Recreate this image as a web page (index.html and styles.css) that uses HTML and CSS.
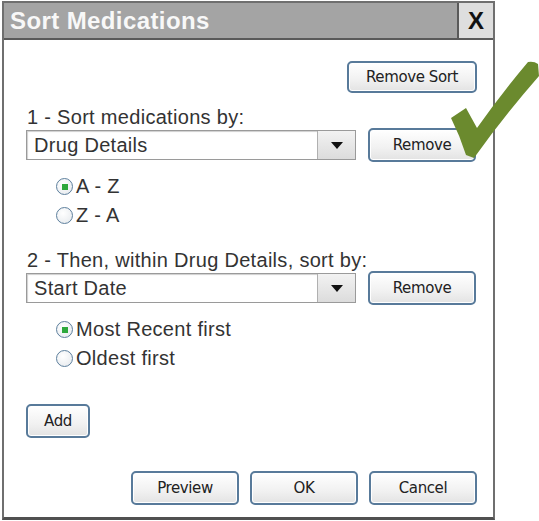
FILE: index.html
```html
<!DOCTYPE html>
<html>
<head>
<meta charset="utf-8">
<link rel="stylesheet" href="styles.css">
</head>
<body>
<div class="dialog">
  <div class="titlebar">
    <div class="title">Sort Medications</div>
    <div class="close">X</div>
  </div>
  <div class="content">
    <div class="row-end"><button class="btn btn-sort">Remove Sort</button></div>
    <div class="label label-1">1 - Sort medications by:</div>
    <div class="select-row">
      <div class="select"><span class="select-text">Drug Details</span><span class="select-arrow"><span class="tri"></span></span></div>
      <button class="btn btn-remove">Remove</button>
    </div>
    <div class="radios">
      <div class="radio"><span class="circle checked"></span><span>A - Z</span></div>
      <div class="radio"><span class="circle"></span><span>Z - A</span></div>
    </div>
    <div class="label label-2">2 - Then, within Drug Details, sort by:</div>
    <div class="select-row">
      <div class="select"><span class="select-text">Start Date</span><span class="select-arrow"><span class="tri"></span></span></div>
      <button class="btn btn-remove">Remove</button>
    </div>
    <div class="radios">
      <div class="radio"><span class="circle checked"></span><span>Most Recent first</span></div>
      <div class="radio"><span class="circle"></span><span>Oldest first</span></div>
    </div>
    <div class="add-row"><button class="btn btn-add">Add</button></div>
    <div class="footer">
      <button class="btn btn-foot">Preview</button>
      <button class="btn btn-foot">OK</button>
      <button class="btn btn-foot">Cancel</button>
    </div>
  </div>
</div>
<svg class="check" width="93" height="104" viewBox="0 0 93 104">
  <path d="M5 60 L20 50 L31 70 Q55 36 82 4 Q88 3 92 6 L93 18 Q58 58 28 100 L20 97 Q14 78 5 60 Z" fill="#6b8a2e"/>
</svg>
</body>
</html>
```

FILE: styles.css
```css
html, body {
  margin: 0;
  padding: 0;
  background: #ffffff;
}
body {
  position: relative;
  width: 539px;
  height: 521px;
  overflow: hidden;
  font-family: "Liberation Sans", Arial, sans-serif;
}
.dialog {
  box-sizing: border-box;
  margin: 1px 0 0 2px;
  width: 493px;
  height: 519px;
  border: 2px solid #6f6f6f;
  border-bottom: 3px solid #505050;
  background: #ffffff;
  display: flex;
  flex-direction: column;
}
.titlebar {
  height: 35px;
  flex: none;
  display: flex;
  background: #a4a4a4;
  border-bottom: 2px solid #5a5a5a;
}
.title {
  flex: 1;
  color: #f8f8f8;
  font-weight: bold;
  font-size: 24px;
  letter-spacing: 0.4px;
  line-height: 35px;
  padding-left: 6px;
}
.close {
  width: 34px;
  background: #dedede;
  border-left: 2px solid #5a5a5a;
  color: #111;
  font-weight: bold;
  font-size: 24px;
  line-height: 35px;
  text-align: center;
}
.content {
  display: flex;
  flex-direction: column;
  padding: 0 16px 0 22px;
}
.btn {
  box-sizing: border-box;
  height: 32px;
  border: 2px solid #587a9a;
  border-radius: 5px;
  background: linear-gradient(#ffffff, #f1f1f1 60%, #e3e3e3);
  box-shadow: inset 0 0 0 1px #ffffff;
  font-family: "DejaVu Sans", Verdana, sans-serif;
  font-size: 15px;
  color: #222;
  padding: 0;
  letter-spacing: -0.4px;
}
.row-end {
  display: flex;
  justify-content: flex-end;
  margin-top: 21px;
}
.btn-sort {
  width: 130px;
}
.label {
  font-size: 20px;
  letter-spacing: 0.3px;
  line-height: 20px;
  color: #333;
  padding-left: 1px;
}
.label-1 {
  margin-top: 14px;
}
.label-2 {
  margin-top: 20px;
}
.select-row {
  display: flex;
  align-items: center;
  gap: 12px;
  height: 34px;
  margin-top: 1px;
}
.select {
  box-sizing: border-box;
  width: 330px;
  height: 30px;
  border: 1px solid #9a9a9a;
  box-shadow: inset 1px 1px 1px #cfcfcf;
  display: flex;
  background: #fff;
}
.select-text {
  flex: 1;
  padding-left: 7px;
  font-size: 20px;
  letter-spacing: 0.3px;
  line-height: 28px;
  color: #333;
}
.select-arrow {
  width: 37px;
  border-left: 1px solid #b0b0b0;
  background: linear-gradient(#f2f2f2, #dcdcdc);
  display: flex;
  align-items: center;
  justify-content: center;
}
.tri {
  width: 0;
  height: 0;
  border-left: 6px solid transparent;
  border-right: 6px solid transparent;
  border-top: 7px solid #111;
}
.btn-remove {
  width: 108px;
  height: 34px;
}
.radios {
  margin-top: 10px;
  padding-left: 30px;
  display: flex;
  flex-direction: column;
}
.radio {
  height: 29px;
  display: flex;
  align-items: center;
  gap: 3px;
  font-size: 20px;
  letter-spacing: 0.3px;
  color: #333;
}
.circle {
  box-sizing: border-box;
  width: 17px;
  height: 17px;
  border-radius: 50%;
  border: 1.5px solid #5d7f9d;
  background: radial-gradient(circle at 40% 35%, #ffffff, #e4e8ec);
  display: flex;
  align-items: center;
  justify-content: center;
}
.circle.checked::after {
  content: "";
  width: 6px;
  height: 6px;
  background: #2ea83c;
}
.add-row {
  margin-top: 31px;
  display: flex;
}
.btn-add {
  width: 64px;
  height: 34px;
}
.footer {
  margin-top: 33px;
  display: flex;
  justify-content: flex-end;
  gap: 11px;
}
.btn-foot {
  width: 108px;
  height: 34px;
}
.check {
  position: absolute;
  left: 446px;
  top: 58px;
}
```
